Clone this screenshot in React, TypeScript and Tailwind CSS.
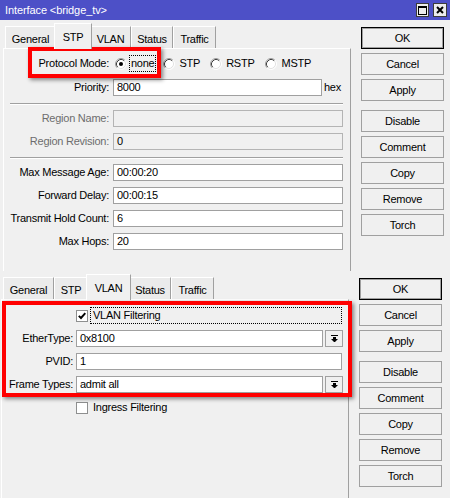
import React from "react";

function Radio({ checked }: { checked?: boolean }) {
  return (
    <svg width="12" height="12" viewBox="0 0 12 12" className="shrink-0">
      <circle cx="6" cy="6" r="5" fill="#ffffff" />
      <path d="M2.11 9.89 A5.5 5.5 0 0 1 9.89 2.11" fill="none" stroke="#a0a0a0" strokeWidth="1" />
      <path d="M9.89 2.11 A5.5 5.5 0 0 1 2.11 9.89" fill="none" stroke="#ffffff" strokeWidth="1" />
      <path d="M2.82 9.18 A4.5 4.5 0 0 1 9.18 2.82" fill="none" stroke="#404040" strokeWidth="1" />
      <path d="M9.18 2.82 A4.5 4.5 0 0 1 2.82 9.18" fill="none" stroke="#e3e3e3" strokeWidth="1" />
      {checked && <circle cx="6" cy="6" r="2" fill="#000000" />}
    </svg>
  );
}

function Check({ checked }: { checked?: boolean }) {
  return (
    <div className="w-[12px] h-[12px] shrink-0 bg-white border border-[#8e8f8f] flex items-center justify-center">
      {checked && (
        <svg width="10" height="10" viewBox="0 0 10 10">
          <path d="M1.8 4.8 L4 7 L8.3 2.2" fill="none" stroke="#000" strokeWidth="1.9" />
        </svg>
      )}
    </div>
  );
}

function DropBtn() {
  return (
    <div className="ml-[2px] w-[18px] h-[17px] shrink-0 bg-[#f0f0f0] border border-[#a0a0a0] flex items-center justify-center">
      <svg width="7" height="7" viewBox="0 0 7 7">
        <rect x="0" y="0" width="7" height="1" fill="#000" />
        <rect x="2" y="2" width="3" height="2" fill="#000" />
        <polygon points="0,4 7,4 3.5,7.5" fill="#000" />
      </svg>
    </div>
  );
}

function Tabs({ sel }: { sel: string }) {
  const tabs = [
    { t: "General", w: "w-[51px]", ws: "w-[55px]" },
    { t: "STP", w: "w-[34px]", ws: "w-[38px]" },
    { t: "VLAN", w: "w-[41px]", ws: "w-[45px]" },
    { t: "Status", w: "w-[42px]", ws: "w-[46px]" },
    { t: "Traffic", w: "w-[43px]", ws: "w-[47px]" },
  ];
  return (
    <div className="h-[28px] flex items-end pl-[2px]">
      {tabs.map((x) =>
        x.t === sel ? (
          <div
            key={x.t}
            className={
              x.ws +
              " relative z-10 -mx-[2px] -mb-[1px] h-[26px] bg-[#f0f0f0] border-l border-t border-r border-l-white border-t-white border-r-[#a0a0a0] flex justify-center pt-[8px]"
            }
          >
            {x.t}
          </div>
        ) : (
          <div
            key={x.t}
            className={
              x.w +
              " h-[22px] bg-[#ebebeb] border-l border-t border-r border-l-white border-t-white border-r-[#a0a0a0] flex justify-center pt-[7px]"
            }
          >
            {x.t}
          </div>
        )
      )}
    </div>
  );
}

function Buttons() {
  const b =
    "h-[22px] w-[83px] flex items-center justify-center bg-[#f0f0f0] border border-[#a0a0a0] mt-[4px]";
  return (
    <div className="flex flex-col ml-[10px] mt-[7px]">
      <div className="h-[22px] w-[83px] flex items-center justify-center bg-[#f0f0f0] border border-black shadow-[inset_0_0_0_1px_#a0a0a0]">
        OK
      </div>
      <div className={b}>Cancel</div>
      <div className={b}>Apply</div>
      <div className="h-[22px] w-[83px] flex items-center justify-center bg-[#f0f0f0] border border-[#a0a0a0] mt-[9px]">
        Disable
      </div>
      <div className={b}>Comment</div>
      <div className={b}>Copy</div>
      <div className={b}>Remove</div>
      <div className={b}>Torch</div>
    </div>
  );
}

function Field({ value, cls, disabled }: { value: string; cls: string; disabled?: boolean }) {
  return (
    <div
      className={
        cls +
        (disabled ? " bg-[#f0f0f0] border-[#b4b4b4]" : " bg-white border-[#a0a0a0]") +
        " h-[17px] border flex items-center pl-[3px] shrink-0"
      }
    >
      {value}
    </div>
  );
}

function TopRow({ label, value, disabled, mt }: { label: string; value: string; disabled?: boolean; mt: string }) {
  return (
    <div className={"flex items-center h-[17px] " + mt}>
      <div className={"w-[105px] text-right " + (disabled ? "text-[#6d6d6d]" : "")}>{label}</div>
      <Field value={value} cls="ml-[4px] w-[230px]" disabled={disabled} />
    </div>
  );
}

function Sep({ mt }: { mt: string }) {
  return <div className={"ml-[6px] mr-[7px] h-[2px] border-t border-t-[#a0a0a0] border-b border-b-white " + mt} />;
}

export default function App() {
  return (
    <div className="relative w-[450px] h-[498px] overflow-hidden bg-[#f0f0f0] text-[11px] tracking-[-0.25px] text-black font-['Liberation_Sans',Arial,sans-serif] leading-none flex flex-col">
      {/* Top window */}
      <div className="h-[271px] shrink-0 overflow-hidden flex flex-col">
        <div className="h-[20px] shrink-0 bg-[#4d50c7] flex items-center text-white tracking-[-0.1px]">
          <span className="ml-[5px]">Interface &lt;bridge_tv&gt;</span>
          <div className="ml-auto mr-[3px] flex items-center gap-[4px]">
            <div className="w-[13px] h-[14px] bg-[#ececec] border border-[#3c3c3c] flex items-center justify-center">
              <svg width="9" height="9" viewBox="0 0 9 9">
                <rect x="0.5" y="0.5" width="8" height="8" fill="none" stroke="#000" />
                <rect x="0" y="0" width="9" height="2" fill="#000" />
              </svg>
            </div>
            <div className="w-[14px] h-[14px] bg-[#ececec] border border-[#3c3c3c] flex items-center justify-center">
              <svg width="8" height="8" viewBox="0 0 8 8">
                <path d="M1 1 L7 7 M7 1 L1 7" stroke="#000" strokeWidth="2" />
              </svg>
            </div>
          </div>
        </div>
        <div className="flex items-start">
          <div className="ml-[3px] w-[348px]">
            <Tabs sel="STP" />
            <div className="h-[240px] border-t border-l border-r border-t-white border-l-white border-r-[#a0a0a0] flex flex-col">
              <div className="flex items-center h-[17px] mt-[6px]">
                <div className="w-[105px] text-right">Protocol Mode:</div>
                <div className="ml-[6px] flex items-center">
                  <Radio checked />
                  <span className="ml-[2px] h-[17px] px-[1px] flex items-center border border-dotted border-black">none</span>
                </div>
                <div className="ml-[7px] flex items-center">
                  <Radio />
                  <span className="ml-[2px] h-[17px] px-[1px] flex items-center border border-transparent">STP</span>
                </div>
                <div className="ml-[8px] flex items-center">
                  <Radio />
                  <span className="ml-[2px] h-[17px] px-[1px] flex items-center border border-transparent">RSTP</span>
                </div>
                <div className="ml-[9px] flex items-center">
                  <Radio />
                  <span className="ml-[2px] h-[17px] px-[1px] flex items-center border border-transparent">MSTP</span>
                </div>
              </div>
              <div className="flex items-center h-[17px] mt-[7px]">
                <div className="w-[105px] text-right">Priority:</div>
                <Field value="8000" cls="ml-[4px] w-[209px]" />
                <span className="ml-[2px]">hex</span>
              </div>
              <Sep mt="mt-[7px]" />
              <TopRow label="Region Name:" value="" disabled mt="mt-[5px]" />
              <TopRow label="Region Revision:" value="0" disabled mt="mt-[6px]" />
              <Sep mt="mt-[7px]" />
              <TopRow label="Max Message Age:" value="00:00:20" mt="mt-[5px]" />
              <TopRow label="Forward Delay:" value="00:00:15" mt="mt-[6px]" />
              <TopRow label="Transmit Hold Count:" value="6" mt="mt-[6px]" />
              <TopRow label="Max Hops:" value="20" mt="mt-[6px]" />
            </div>
          </div>
          <Buttons />
        </div>
      </div>

      {/* Bottom window */}
      <div className="flex-1 flex items-start">
        <div className="ml-[1px] w-[348px]">
          <Tabs sel="VLAN" />
          <div className="h-[220px] border-t border-l border-r border-t-white border-l-white border-r-[#a0a0a0] flex flex-col">
            <div className="flex items-center h-[17px] mt-[7px]">
              <div className="ml-[74px]">
                <Check checked />
              </div>
              <div className="ml-[2px] w-[252px] h-[17px] flex items-center pl-[2px] border border-dotted border-black">
                VLAN Filtering
              </div>
            </div>
            <div className="flex items-center h-[17px] mt-[6px]">
              <div className="w-[71px] text-right">EtherType:</div>
              <Field value="0x8100" cls="ml-[3px] w-[247px]" />
              <DropBtn />
            </div>
            <div className="flex items-center h-[17px] mt-[6px]">
              <div className="w-[71px] text-right">PVID:</div>
              <Field value="1" cls="ml-[3px] w-[266px]" />
            </div>
            <div className="flex items-center h-[17px] mt-[6px]">
              <div className="w-[71px] text-right">Frame Types:</div>
              <Field value="admit all" cls="ml-[3px] w-[247px]" />
              <DropBtn />
            </div>
            <div className="flex items-center h-[17px] mt-[6px]">
              <div className="ml-[74px]">
                <Check />
              </div>
              <span className="ml-[5px]">Ingress Filtering</span>
            </div>
          </div>
        </div>
        <Buttons />
      </div>

      {/* Red annotation boxes */}
      <div className="absolute left-[28px] top-[47px] w-[133px] h-[31px] border-[4px] border-[#ff0000] shadow-[2px_2px_4px_rgba(0,0,0,0.45)]" />
      <div className="absolute left-[2px] top-[301px] w-[350px] h-[96px] border-[4px] border-[#ff0000] shadow-[2px_2px_4px_rgba(0,0,0,0.45)]" />
    </div>
  );
}
